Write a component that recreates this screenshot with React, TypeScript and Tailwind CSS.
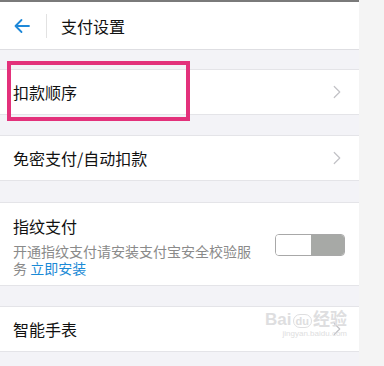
import { ChevronRight } from 'lucide-react'

const FONT = { fontFamily: '"Noto Sans CJK SC", "Noto Sans", sans-serif' }

function Row({ label }: { label: string }) {
  return (
    <div className="flex h-[46px] items-center justify-between border-y border-[#e4e4e8] bg-white pl-[13px] pr-[11px]">
      <span className="text-[16px] text-[#111]">{label}</span>
      <ChevronRight className="h-[22px] w-[22px] text-[#c2c2c6]" strokeWidth={1.3} />
    </div>
  )
}

export default function App() {
  return (
    <div className="flex h-[366px] w-[384px] overflow-hidden bg-[#f4f4f4]" style={FONT}>
      <div className="flex w-[359px] flex-col bg-[#f3f3f7]">
        <div className="h-[2px] bg-[#7a7a7a]" />
        {/* Header */}
        <div className="flex h-[48px] items-center border-b border-[#dedee2] bg-white">
          <svg className="ml-[13px] h-[18px] w-[18px]" viewBox="0 0 18 18" fill="none" stroke="#1e88d8" strokeWidth="1.8" strokeLinecap="round" strokeLinejoin="round">
            <path d="M16 9H2.5M8.5 3L2.5 9l6 6" />
          </svg>
          <div className="ml-[15px] h-[24px] w-px bg-[#e2e2e2]" />
          <span className="ml-[14px] text-[16px] text-[#111]">支付设置</span>
        </div>

        <div className="relative mt-[19px]">
          <Row label="扣款顺序" />
          <div className="pointer-events-none absolute left-[7px] top-[-8px] h-[60px] w-[183px] border-[4px] border-[#e3317b]" />
        </div>

        <div className="mt-[20px]">
          <Row label="免密支付/自动扣款" />
        </div>

        <div className="mt-[21px] flex items-center border-y border-[#e4e4e8] bg-white pb-[8px] pl-[13px] pr-[14px] pt-[10px]">
          <div className="flex-1">
            <div className="text-[16px] leading-[26px] text-[#111]">指纹支付</div>
            <div className="mt-[4px] text-[14px] leading-[17px] text-[#8a8a8a]">
              <div>开通指纹支付请安装支付宝安全校验服</div>
              <div>
                务 <span className="text-[#1a8ad6]">立即安装</span>
              </div>
            </div>
          </div>
          <div className="flex h-[22px] w-[70px] overflow-hidden rounded-[4px] border border-[#a8a8a8]">
            <div className="w-[35px] bg-white" />
            <div className="flex-1 bg-[#a7a9a6]" />
          </div>
        </div>

        <div className="relative mt-[20px]">
          <Row label="智能手表" />
          <div className="pointer-events-none absolute right-[12px] top-[5px] flex flex-col items-end leading-none text-[#dedee0]" style={{ fontFamily: '"Liberation Sans", "Noto Sans CJK SC", sans-serif' }}>
            <span className="text-[17px] font-bold">Bai<span className="mx-[1px] rounded-full border border-[#dedee0] px-[2px] text-[11px]">du</span>经验</span>
            <span className="mt-[2px] text-[8px]">jingyan.baidu.com</span>
          </div>
        </div>
      </div>
    </div>
  )
}
